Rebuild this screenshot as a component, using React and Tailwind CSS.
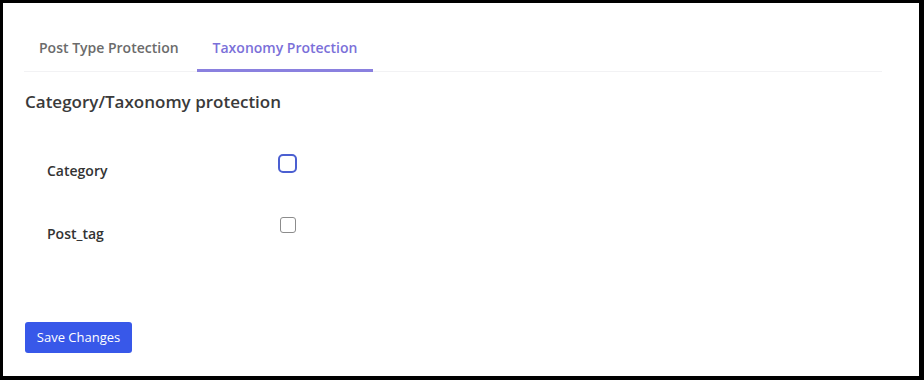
import { useState } from "react";

const tabs = ["Post Type Protection", "Taxonomy Protection"];
const taxonomies = [
  { id: "category", label: "Category" },
  { id: "post_tag", label: "Post_tag" },
];

export default function App() {
  const [active, setActive] = useState(1);
  const [checked, setChecked] = useState({});

  return (
    <div
      className="h-[380px] w-[924px] bg-white border-black border-t-[3px] border-l-[3px] border-r-[5px] border-b-[4px] text-[#333]"
      style={{ fontFamily: '"Open Sans", "Noto Sans", sans-serif' }}
    >
      <div className="pl-[21px] pr-[37px] pt-[23px]">
        <div className="flex border-b border-b-[#f2f2f4]">
          {tabs.map((t, i) => (
            <button
              key={t}
              onClick={() => setActive(i)}
              className={
                i === active
                  ? "px-4 pt-[12px] pb-[11px] text-[14px] leading-5 font-semibold text-[#7b70d9] border-b-[3px] border-b-[#8a80df] -mb-px"
                  : "pl-[15px] pr-[18px] pt-[12px] pb-[11px] text-[14px] leading-5 font-semibold text-[#6b6b6b] border-b-[3px] border-b-transparent -mb-px"
              }
            >
              {t}
            </button>
          ))}
        </div>

        <div className="pl-px pt-[18px] text-[17px] leading-6 font-semibold text-[#3a3a3a]">
          Category/Taxonomy protection
        </div>

        <div className="pt-[25px] pl-[23px]">
          {taxonomies.map((tx, i) => (
            <div key={tx.id} className={i === 0 ? "flex h-[64px]" : "flex h-[63px]"}>
              <div className={i === 0 ? "w-[231px] pt-[22px] text-[14px] leading-5 font-semibold text-[#333]" : "w-[231px] pt-[21px] text-[14px] leading-5 font-semibold text-[#333]"}>
                {tx.label}
              </div>
              <div className={i === 0 ? "pt-[15px]" : "pt-[14px] pl-[2px]"}>
                <button
                  onClick={() =>
                    setChecked((p) => ({ ...p, [tx.id]: !p[tx.id] }))
                  }
                  className={
                    i === 0
                      ? "block h-[19px] w-[19px] rounded-[5px] border-2 border-[#4b5fd1] bg-white"
                      : "block h-[16px] w-[16px] rounded-[3px] border border-[#8c8c8c] bg-white"
                  }
                />
              </div>
            </div>
          ))}
        </div>

        <button className="mt-[56px] ml-px h-[31px] w-[107px] rounded-[3px] bg-[#3858e9] text-[13px] text-white">
          Save Changes
        </button>
      </div>
    </div>
  );
}
